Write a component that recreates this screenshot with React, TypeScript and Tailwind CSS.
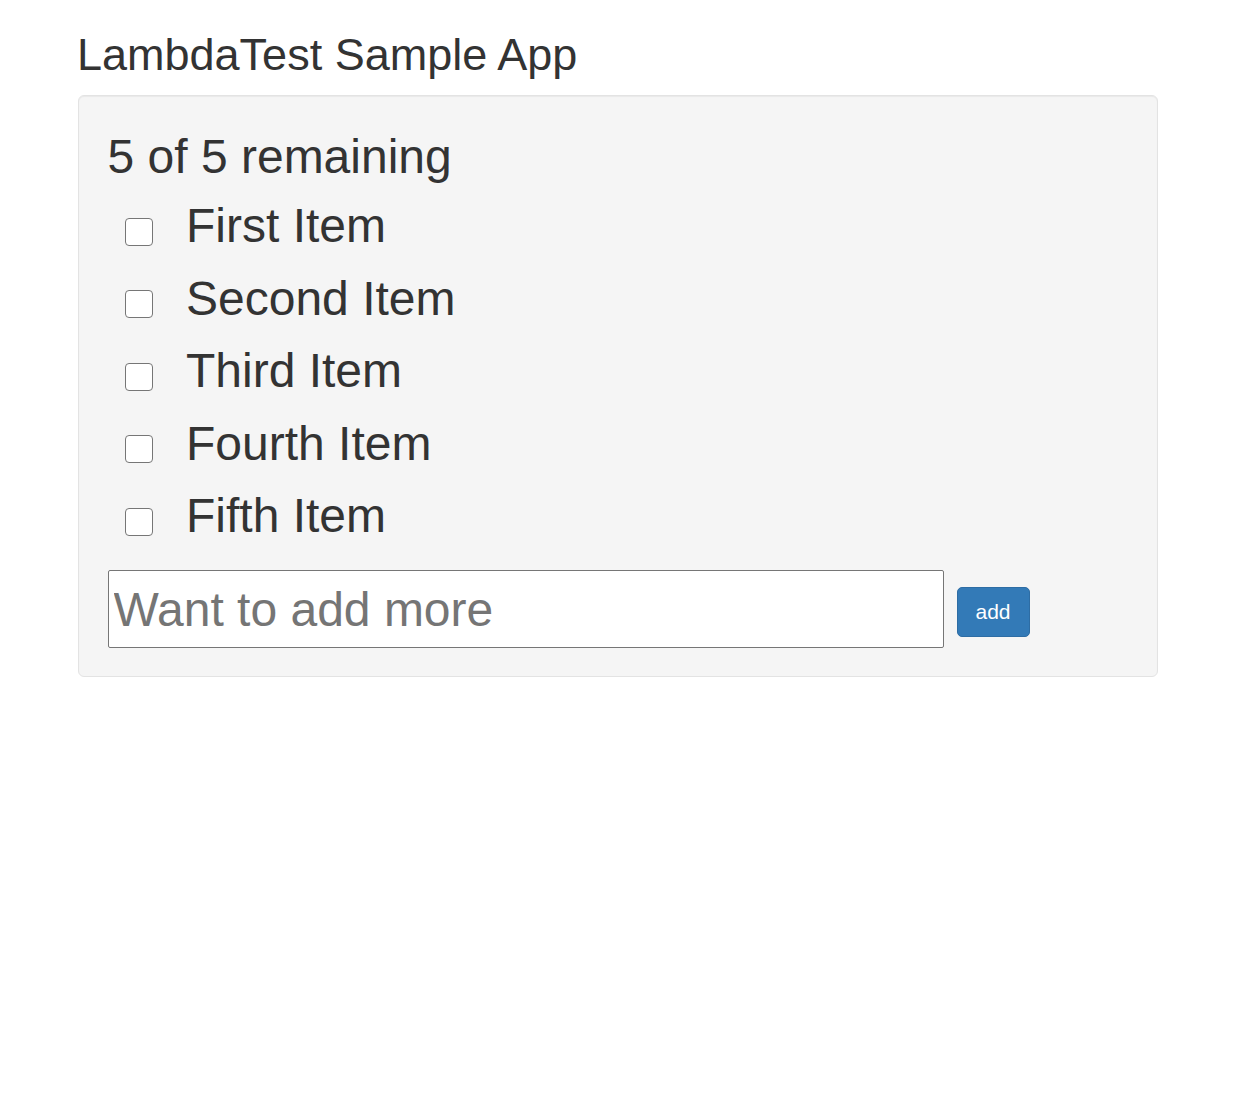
import { useState } from "react";

const initialItems = [
  "First Item",
  "Second Item",
  "Third Item",
  "Fourth Item",
  "Fifth Item",
];

export default function App() {
  const [done, setDone] = useState<boolean[]>(initialItems.map(() => false));
  const [items, setItems] = useState<string[]>(initialItems);
  const [text, setText] = useState("");

  const remaining = done.filter((d) => !d).length;

  const onAdd = () => {
    if (!text.trim()) return;
    setItems([...items, text]);
    setDone([...done, false]);
    setText("");
  };

  return (
    <div className="min-h-screen bg-white font-['Liberation_Sans',Arial,sans-serif] text-[#333333]">
      <div className="mx-auto w-[1080px] pt-[30px]">
        <h2 className="-ml-[1px] mb-[15px] text-[45px] leading-[1.1]">
          LambdaTest Sample App
        </h2>
        <div className="rounded-[6px] border border-[#e3e3e3] bg-[#f5f5f5] px-[28.5px] pt-[28.5px] pb-[27.5px] shadow-[inset_0_1px_1px_rgba(0,0,0,0.05)]">
          <h3 className="h-[66px] text-[48px] leading-[66px]">
            {remaining} of {items.length} remaining
          </h3>
          <ul>
            {items.map((item, i) => (
              <li key={i} className="flex h-[72.5px] items-start pl-[17.5px]">
                <input
                  type="checkbox"
                  checked={done[i]}
                  onChange={() =>
                    setDone(done.map((d, j) => (j === i ? !d : d)))
                  }
                  className="mt-[27.5px] h-[28px] w-[28px] shrink-0 appearance-none rounded-[4px] border-[1.5px] border-[#767676] bg-white checked:bg-[#0075ff]"
                />
                <span
                  className={
                    "ml-[33px] text-[48px] leading-[72.5px]" +
                    (done[i] ? " line-through text-[#999999]" : "")
                  }
                >
                  {item}
                </span>
              </li>
            ))}
          </ul>
          <div className="mt-[17.5px] flex items-start">
            <input
              value={text}
              onChange={(e) => setText(e.target.value)}
              placeholder="Want to add more"
              className="h-[78px] w-[836px] rounded-[2px] border border-[#767676] bg-white px-[5px] text-[48px] text-[#333333] placeholder:text-[#757575] focus:outline-none"
            />
            <button
              onClick={onAdd}
              className="ml-[13px] mt-[17px] h-[50px] rounded-[5px] border border-[#2e6da4] bg-[#337ab7] px-[18px] text-[21px] leading-[30px] text-white"
            >
              add
            </button>
          </div>
        </div>
      </div>
    </div>
  );
}
